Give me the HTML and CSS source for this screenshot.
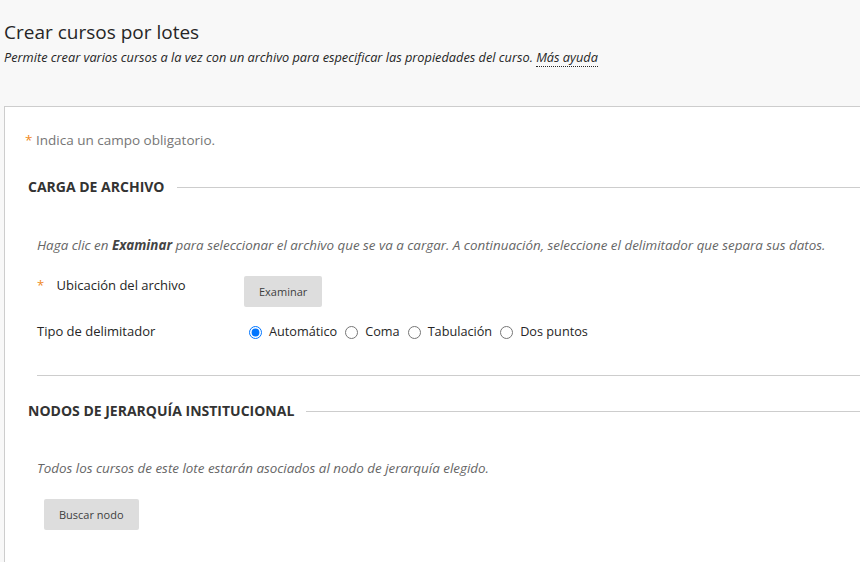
FILE: index.html
```html
<!DOCTYPE html>
<html lang="es">
  <head>
    <meta charset="UTF-8" />
    <title>Crear cursos por lotes</title>
    <link rel="stylesheet" href="styles.css">
  </head>
  <body>
    <!-- Page header -->
    <div class="page-header">
      <h1 class="page-title">Crear cursos por lotes</h1>
      <p class="page-help">Permite crear varios cursos a la vez con un archivo para especificar las propiedades del curso. <a href="#">Más ayuda</a></p>
    </div>

    <!-- Form panel -->
    <div class="panel">
      <p class="required-note"><span class="req">*</span> Indica un campo obligatorio.</p>

      <div class="section">
        <h2 class="section-title"><span>CARGA DE ARCHIVO</span></h2>
        <div class="section-body">
          <p class="instructions">Haga clic en <b>Examinar</b> para seleccionar el archivo que se va a cargar. A continuación, seleccione el delimitador que separa sus datos.</p>

          <div class="field-row">
            <div class="field-label"><span class="req">*</span> Ubicación del archivo</div>
            <div class="field-input">
              <button class="btn btn-browse" type="button">Examinar</button>
            </div>
          </div>

          <div class="field-row radio-row">
            <div class="field-label">Tipo de delimitador</div>
            <div class="field-input radios">
              <label><input type="radio" name="delim" checked /> Automático</label>
              <label><input type="radio" name="delim" /> Coma</label>
              <label><input type="radio" name="delim" /> Tabulación</label>
              <label><input type="radio" name="delim" /> Dos puntos</label>
            </div>
          </div>
        </div>
        <hr class="divider" />
      </div>

      <div class="section">
        <h2 class="section-title"><span>NODOS DE JERARQUÍA INSTITUCIONAL</span></h2>
        <div class="section-body section-body-node">
          <p class="instructions">Todos los cursos de este lote estarán asociados al nodo de jerarquía elegido.</p>
          <button class="btn btn-node" type="button">Buscar nodo</button>
        </div>
      </div>
    </div>
  </body>
</html>
```

FILE: styles.css
```css
body {
  font-family: "Open Sans", Arial, sans-serif;
  background-color: #f8f8f8;
  color: #262626;
  margin: 0;
  padding: 0;
  overflow: hidden;
}

.page-header {
  padding: 19px 0 0 4px;
  height: 106px;
  box-sizing: border-box;
}

.page-title {
  font-size: 19px;
  font-weight: normal;
  margin: 0;
  line-height: 26px;
  color: #262626;
}

.page-help {
  font-size: 12.75px;
  font-style: italic;
  margin: 3px 0 0;
  color: #262626;
}

.page-help a {
  color: #262626;
  text-decoration: none;
  border-bottom: 1px dotted #262626;
}

.panel {
  background-color: #ffffff;
  border: 1px solid #cdcdcd;
  border-right: none;
  margin-left: 4px;
  padding: 23px 0 40px 20px;
  min-height: 460px;
}

.required-note {
  font-size: 13.5px;
  color: #767676;
  margin: 0;
  line-height: 20px;
}

.req {
  color: #f08a24;
}

.section {
  margin-top: 27px;
}

.section + .section {
  margin-top: 0;
}

.section-title {
  display: flex;
  align-items: center;
  font-size: 14px;
  font-weight: bold;
  color: #333;
  margin: 0 0 0 3px;
  line-height: 20px;
}

.section-title::after {
  content: "";
  flex: 1;
  border-top: 1px solid #cdcdcd;
  margin-left: 12px;
}

.section-body {
  padding: 38px 0 0 12px;
}

.section-body-node {
  padding-top: 37px;
}

.divider {
  border: none;
  border-top: 1px solid #cdcdcd;
  margin: 35px 0 25px 12px;
}

.instructions {
  font-size: 13.4px;
  font-style: italic;
  color: #666;
  margin: 0 0 20px;
  line-height: 20px;
}

.instructions b {
  color: #444;
}

.field-row {
  display: flex;
  font-size: 13px;
  color: #262626;
}

.field-label {
  width: 207px;
  line-height: 18px;
}

.field-label .req {
  margin-right: 9px;
}

.field-row:first-of-type .field-label {
  padding-top: 1px;
}

.radio-row {
  margin-top: 15px;
}

.radios {
  display: flex;
  gap: 8px;
  padding-left: 5px;
  font-size: 12.7px;
}

.radios label {
  display: flex;
  align-items: center;
}

.radios input {
  margin: 2px 7px 0 0;
}

.btn {
  font-family: "Open Sans", Arial, sans-serif;
  font-size: 11px;
  color: #3d3d3d;
  background-color: #dddddd;
  border: none;
  border-radius: 2px;
  height: 31px;
  padding: 0 15px;
}

.btn-browse {
  margin-top: 1px;
}

.btn-node {
  margin-top: 1px;
  margin-left: 7px;
}
```
